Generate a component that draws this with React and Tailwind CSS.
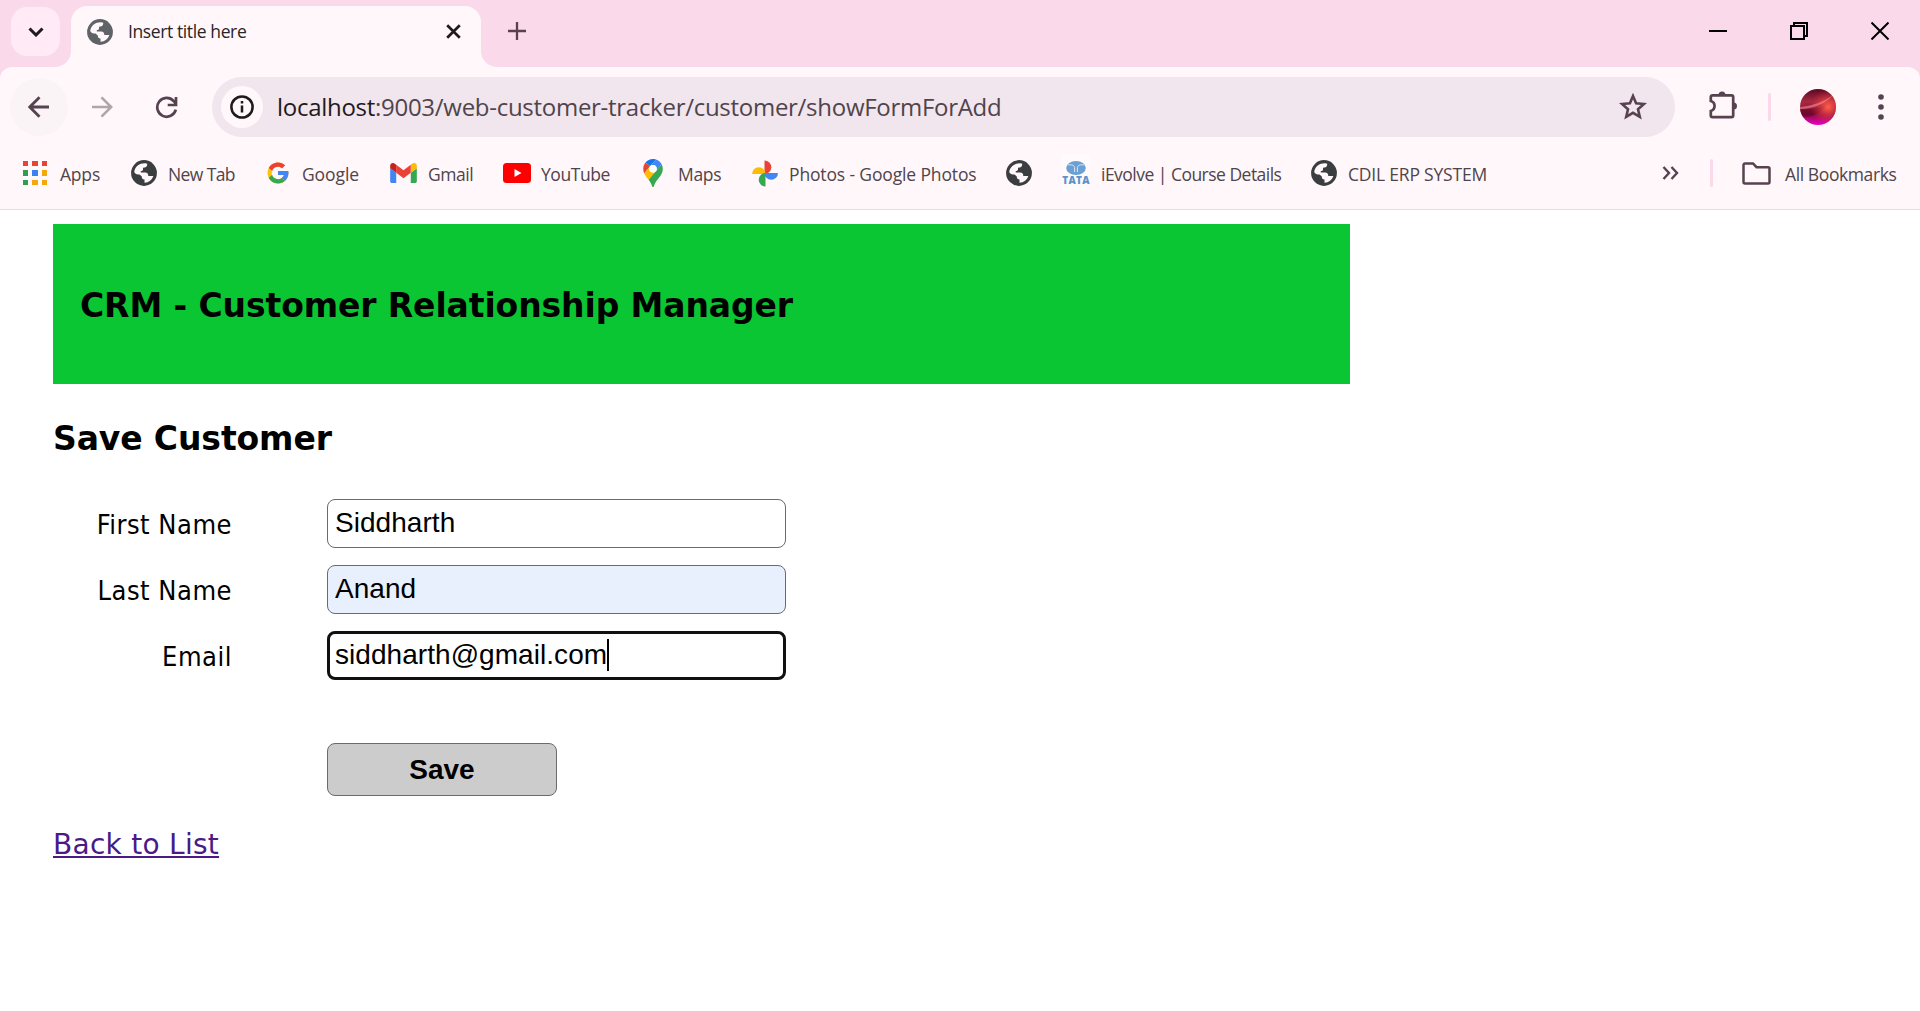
import React from "react";

function Globe({ size = 26, color = "#3b3e40", bg = "#fff7f9" }) {
  return (
    <svg width={size} height={size} viewBox="0 0 26 26">
      <circle cx="13" cy="13" r="12.900" fill={color} />
      <path
        d="M3.200 12C4 6.500 8.500 3.200 14 3.300l2.300.5c0 3-1.800 4-4.300 4v1.700c0 1-1 1.500-2.200 1.500v1.500H14c2.500 0 3.300 1.300 3.300 3.500h5C21 20 18 22.500 13.500 22.800v-3.300c-2 0-2.700-1-2.700-3l-2.300-2c-2.500 0-4.500-.5-5.300-2.500z"
        fill={bg}
      />
    </svg>
  );
}

function AppsIcon() {
  const c = ["#ea4335", "#ea4335", "#ea4335", "#2e9e52", "#3b82f0", "#f5a80c", "#2e9e52", "#f5a80c", "#f5a80c"];
  return (
    <div className="grid w-6 grid-cols-3 gap-x-[4px] gap-y-[4px]">
      {c.map((x, i) => (
        <span key={i} className="h-[5.300px] w-[5.300px]" style={{ background: x }} />
      ))}
    </div>
  );
}

function Google() {
  return (
    <svg width="22" height="22" viewBox="3 3 42 42">
      <path fill="#FFC107" d="M43.611 20.083H42V20H24v8h11.303c-1.649 4.657-6.080 8-11.303 8-6.627 0-12-5.373-12-12s5.373-12 12-12c3.059 0 5.842 1.154 7.961 3.039l5.657-5.657C34.046 6.053 29.268 4 24 4 12.955 4 4 12.955 4 24s8.955 20 20 20 20-8.955 20-20c0-1.341-.138-2.650-.389-3.917z" />
      <path fill="#EA4335" d="M6.306 14.691l6.571 4.819C14.655 15.108 18.961 12 24 12c3.059 0 5.842 1.154 7.961 3.039l5.657-5.657C34.046 6.053 29.268 4 24 4 16.318 4 9.656 8.337 6.306 14.691z" />
      <path fill="#34A853" d="M24 44c5.166 0 9.860-1.977 13.409-5.192l-6.190-5.238C29.211 35.091 26.715 36 24 36c-5.202 0-9.619-3.317-11.283-7.946l-6.522 5.025C9.505 39.556 16.227 44 24 44z" />
      <path fill="#4285F4" d="M43.611 20.083H42V20H24v8h11.303c-.792 2.237-2.231 4.166-4.087 5.571l6.193 5.238C36.971 39.205 44 34 44 24c0-1.341-.138-2.650-.389-3.917z" />
    </svg>
  );
}

function Gmail() {
  return (
    <svg width="27" height="20" viewBox="52 42 88 66">
      <path fill="#4285f4" d="M58 108h14V74L52 59v43c0 3.320 2.690 6 6 6" />
      <path fill="#34a853" d="M120 108h14c3.320 0 6-2.690 6-6V59l-20 15" />
      <path fill="#fbbc04" d="M120 48v26l20-15v-8c0-7.420-8.470-11.650-14.400-7.200" />
      <path fill="#ea4335" d="M72 74V48l24 18 24-18v26L96 92" />
      <path fill="#c5221f" d="M52 51v8l20 15V48l-5.600-4.200c-5.940-4.450-14.400-.22-14.400 7.200" />
    </svg>
  );
}

function YouTube() {
  return (
    <svg width="28" height="20" viewBox="0 0 28 20">
      <rect width="28" height="20" rx="3.500" fill="#f00" />
      <path d="M11.500 6v8l7-4z" fill="#fff" />
    </svg>
  );
}

function Maps() {
  return (
    <svg width="20" height="28" viewBox="0 0 92.300 132.300">
      <path fill="#1a73e8" d="M60.200 2.200C55.800.8 51 0 46.100 0 32 0 19.300 6.400 10.800 16.500l21.800 18.300z" />
      <path fill="#ea4335" d="M10.800 16.500C4.100 24.500 0 34.900 0 46.100c0 8.700 1.700 15.700 4.600 22l28-33.300z" />
      <path fill="#4285f4" d="M46.200 28.500c9.800 0 17.700 7.900 17.700 17.700 0 4.300-1.600 8.300-4.200 11.400 0 0 13.900-16.600 27.500-32.700-5.600-10.800-15.300-19-27-22.700L32.600 34.800c3.300-3.800 8.100-6.300 13.600-6.300" />
      <path fill="#fbbc04" d="M46.200 63.800c-9.800 0-17.700-7.900-17.700-17.700 0-4.300 1.500-8.300 4.100-11.300l-28 33.300c4.800 10.600 12.800 19.200 21 29.900l34.100-40.500c-3.300 3.900-8.100 6.300-13.500 6.300" />
      <path fill="#34a853" d="M59.100 109.200c15.400-24.100 33.300-35 33.300-63 0-7.700-1.900-14.900-5.200-21.300L25.600 98c2.600 3.400 5.300 7.300 7.900 11.300 9.400 14.500 6.800 23.100 12.800 23.100s3.400-8.700 12.800-23.200" />
      <circle cx="46" cy="46" r="18" fill="#fff" />
    </svg>
  );
}

function Photos() {
  return (
    <svg width="26" height="27" viewBox="0 0 26 27">
      <path fill="#ea4335" d="M12.500 0.500a6.800 6.800 0 0 1 0 13.600z" />
      <path fill="#fbbc04" d="M0 14a6.800 6.800 0 0 1 13.600 0z" />
      <path fill="#34a853" d="M13.500 26.500a6.800 6.800 0 0 1 0-13.600z" />
      <path fill="#4285f4" d="M26 13a6.800 6.800 0 0 1-13.600 0z" />
    </svg>
  );
}

function Tata() {
  return (
    <div className="flex h-[36px] w-[28px] flex-col items-center justify-center bg-[#fffafc]">
      <svg width="20" height="14" viewBox="0 0 20 14">
        <ellipse cx="10" cy="7" rx="9.800" ry="6.900" fill="#6c9fd3" />
        <path d="M8.600 11V6.500C8.400 4 5 3.400 1.500 4M11.400 11V6.500C11.600 4 15 3.400 18.500 4" stroke="#dbe9f6" strokeWidth="1" fill="none" />
      </svg>
      <span className="text-[10px] leading-[11px] font-extrabold tracking-[0.300px] text-[#5b93cc]">TATA</span>
    </div>
  );
}

function Bookmark({ icon, label, className, iconClass, track }) {
  return (
    <div className={"flex shrink-0 items-center " + className}>
      <span className={"flex shrink-0 items-center " + iconClass}>{icon}</span>
      <span className={"pt-[2px] whitespace-nowrap " + track}>{label}</span>
    </div>
  );
}

function TabStrip() {
  return (
    <div className="flex h-[67px] bg-[#fadaea]">
      <div className="mt-[7px] ml-[11px] flex h-[49px] w-[49px] items-center justify-center rounded-[16px] bg-[#ffeaf5]">
        <svg width="16" height="10" viewBox="0 0 16 10" fill="none" stroke="#1f1a1d" strokeWidth="3">
          <path d="M1.500 1.500 8 8l6.500-6.500" />
        </svg>
      </div>
      <svg className="mt-[51px] -ml-[5px]" width="16" height="16" viewBox="0 0 16 16">
        <path d="M16 0v16H0A16 16 0 0 0 16 0z" fill="#fff7f9" />
      </svg>
      <div className="mt-[6px] flex w-[410px] items-center rounded-t-[16px] bg-[#fff7f9] pb-[10px] pl-[16px]">
        <Globe color="#5f6368" />
        <span className="ml-[15px] flex-1 text-[17.500px] tracking-[-0.390px] text-[#2a2427]">Insert title here</span>
        <svg className="mr-[20px]" width="15" height="15" viewBox="0 0 15 15" stroke="#1f1a1d" strokeWidth="2.700">
          <path d="M1.200 1.200l12.600 12.600M13.800 1.200 1.200 13.800" />
        </svg>
      </div>
      <svg className="mt-[51px]" width="16" height="16" viewBox="0 0 16 16">
        <path d="M0 0v16h16A16 16 0 0 1 0 0z" fill="#fff7f9" />
      </svg>
      <svg className="mt-[22px] ml-[11px]" width="18" height="18" viewBox="0 0 18 18" stroke="#5a414f" strokeWidth="2.300">
        <path d="M9 0v18M0 9h18" />
      </svg>
      <div className="mt-[22px] mr-[31px] ml-auto flex h-[18px]">
        <svg width="18" height="18" viewBox="0 0 18 18" stroke="#000" strokeWidth="2">
          <path d="M0 9h18" />
        </svg>
        <svg className="ml-[63px]" width="18" height="18" viewBox="0 0 18 18" stroke="#000" strokeWidth="2" fill="none">
          <path d="M1 4h13v13H1zM4 4V1h13v13h-3" />
        </svg>
        <svg className="ml-[63px]" width="18" height="18" viewBox="0 0 18 18" stroke="#000" strokeWidth="2">
          <path d="M.5.5l17 17M17.500.5l-17 17" />
        </svg>
      </div>
    </div>
  );
}

function Toolbar() {
  return (
    <div className="flex h-[79px] items-center rounded-t-[12px] bg-[#fff7f9]">
      <div className="ml-[10px] flex h-[58px] w-[58px] items-center justify-center rounded-full bg-[#fbf4f6]">
        <svg width="22" height="22" viewBox="0 0 22 22" fill="none" stroke="#574350" strokeWidth="2.800">
          <path d="M21 11H2M11.500 1.300 1.800 11l9.700 9.700" />
        </svg>
      </div>
      <svg className="ml-[23px]" width="22" height="22" viewBox="0 0 22 22" fill="none" stroke="#b0a5aa" strokeWidth="2.600">
        <path d="M1 11h19M10.500 1.300 20.200 11l-9.700 9.700" />
      </svg>
      <svg className="mt-[2px] ml-[42px]" width="23" height="23" viewBox="0 0 23 23" fill="none" stroke="#574350" strokeWidth="2.700">
        <path d="M20.800 13.600A9.400 9.400 0 1 1 18.600 5l2.400 3M21 1v8h-8.300" />
      </svg>
      <div className="ml-[34px] flex h-[60px] w-[1463px] items-center rounded-full bg-[#f1e5ee]">
        <div className="ml-[9px] flex h-[42px] w-[42px] items-center justify-center rounded-full bg-[#fff7f9]">
          <svg width="24" height="24" viewBox="0 0 24 24" fill="none" stroke="#1f1a1d" strokeWidth="2.500">
            <circle cx="12" cy="12" r="10.600" />
            <path d="M12 10.500v7M12 6v2.600" />
          </svg>
        </div>
        <span className="ml-[14px] text-[24px] tracking-[-0.280px] whitespace-nowrap text-[#50444b]">
          <span className="text-[#1f1a1d]">localhost</span>:9003/web-customer-tracker/customer/showFormForAdd
        </span>
        <svg className="mr-[28px] ml-auto" width="28" height="27" viewBox="0 0 28 27" fill="none" stroke="#574350" strokeWidth="2.600">
          <path d="M14 3l3.100 7.300 7.900.7-6 5.200 1.800 7.700-6.800-4.100-6.800 4.100L9 16.200 3 11l7.900-.7z" />
        </svg>
      </div>
      <svg className="mb-[3px] ml-[33px]" width="30" height="30" viewBox="0 0 30 30">
        <path d="M4.500 5.300h19a1.700 1.700 0 0 1 1.700 1.700v18.500a1.700 1.700 0 0 1-1.700 1.700h-19A1.700 1.700 0 0 1 2.800 25.500v-4.500c5-1.500 5-8.500 0-10V7a1.700 1.700 0 0 1 1.700-1.700z" fill="none" stroke="#574350" strokeWidth="2.700" />
        <path d="M10.500 5a3.500 3.500 0 0 1 7 0zM25.500 12.500a3.500 3.500 0 0 1 0 7z" fill="#574350" />
      </svg>
      <div className="ml-[30px] h-[28px] w-[3px] rounded bg-[#fadaea]" />
      <svg className="ml-[29px]" width="36" height="36" viewBox="0 0 36 36">
        <defs>
          <linearGradient id="av" x1="0" y1="0" x2="0" y2="1">
            <stop offset="0" stopColor="#5a0824" />
            <stop offset=".35" stopColor="#a82840" />
            <stop offset=".7" stopColor="#8a0c40" />
            <stop offset="1" stopColor="#f000c8" />
          </linearGradient>
          <radialGradient id="glow" cx=".78" cy=".5" r=".5">
            <stop offset="0" stopColor="#ff6048" />
            <stop offset="1" stopColor="#e02838" stopOpacity="0" />
          </radialGradient>
          <clipPath id="cl"><circle cx="18" cy="18" r="18" /></clipPath>
        </defs>
        <g clipPath="url(#cl)">
          <rect width="36" height="36" fill="url(#av)" />
          <path d="M0 20c9 1 20-1 27-5-6 11-20 15-27 12z" fill="#500018" opacity=".45" />
          <rect width="36" height="36" fill="url(#glow)" />
          <path d="M0 18C12 17 24 13 33 6 27 14 13 20 0 20z" fill="#f0938a" opacity=".6" />
        </g>
      </svg>
      <svg className="ml-[42px]" width="6" height="26" viewBox="0 0 6 26" fill="#574350">
        <circle cx="3" cy="3" r="2.800" /><circle cx="3" cy="13" r="2.800" /><circle cx="3" cy="23" r="2.800" />
      </svg>
    </div>
  );
}

function Bookmarks() {
  return (
    <div className="flex h-[64px] items-center border-b border-[#e8dde4] bg-[#fff7f9] pb-[9px] pl-[23px] text-[17.500px] text-[#50444b]">
      <Bookmark icon={<AppsIcon />} label="Apps" className="w-[108px]" iconClass="w-[37px]" track="tracking-[-0.200px]" />
      <Bookmark icon={<Globe />} label="New Tab" className="w-[136px]" iconClass="w-[37px]" track="tracking-[-0.600px]" />
      <Bookmark icon={<Google />} label="Google" className="w-[123px]" iconClass="w-[35px]" track="tracking-[-0.100px]" />
      <Bookmark icon={<Gmail />} label="Gmail" className="w-[113px]" iconClass="w-[38px]" track="tracking-[-0.450px]" />
      <Bookmark icon={<YouTube />} label="YouTube" className="w-[140px]" iconClass="w-[38px]" track="tracking-[-0.450px]" />
      <Bookmark icon={<Maps />} label="Maps" className="w-[109px]" iconClass="w-[35px]" track="tracking-[-0.300px]" />
      <Bookmark icon={<Photos />} label="Photos - Google Photos" className="w-[254px]" iconClass="w-[37px]" track="tracking-[-0.140px]" />
      <Bookmark icon={<Globe />} label="" className="w-[56px]" iconClass="w-[37px]" track="" />
      <Bookmark icon={<Tata />} label="iEvolve | Course Details" className="w-[249px]" iconClass="w-[39px]" track="tracking-[-0.520px]" />
      <Bookmark icon={<Globe />} label="CDIL ERP SYSTEM" className="w-[200px]" iconClass="w-[37px]" track="tracking-[-0.200px]" />
      <svg className="mr-[31px] ml-auto" width="17" height="14" viewBox="0 0 17 14" fill="none" stroke="#574350" strokeWidth="2.400">
        <path d="M1.500 1 7 7l-5.500 6M9.500 1 15 7l-5.500 6" />
      </svg>
      <div className="h-[28px] w-[3px] rounded bg-[#fadaea]" />
      <svg className="ml-[29px]" width="29" height="23" viewBox="0 0 29 23" fill="none" stroke="#574350" strokeWidth="2.500">
        <path d="M3 1.500h8l3.500 3.700H26a1.500 1.500 0 0 1 1.500 1.500V20a1.500 1.500 0 0 1-1.500 1.500H3A1.500 1.500 0 0 1 1.500 20V3A1.500 1.500 0 0 1 3 1.500z" />
      </svg>
      <span className="ml-[14px] w-[135px] pt-[2px] tracking-[-0.400px] whitespace-nowrap">All Bookmarks</span>
    </div>
  );
}

function Row({ label, value, fieldClass, caret }) {
  return (
    <div className="flex h-[66px] items-center">
      <label className="w-[179px] pt-[4px] text-right font-['DejaVu_Sans_Condensed','DejaVu_Sans',sans-serif] text-[27px] tracking-[0.500px] [font-stretch:condensed]">
        {label}
      </label>
      <div className={"ml-[95px] flex h-[49px] w-[459px] items-center rounded-[8px] font-['Liberation_Sans',sans-serif] text-[28px] " + fieldClass}>
        <span className="tracking-[0.050px]">{value}</span>
        {caret && <span className="h-[32px] w-[2px] bg-black" />}
      </div>
    </div>
  );
}

export default function App() {
  return (
    <div className="h-[1011px] w-[1920px] overflow-hidden bg-white font-['Open_Sans',sans-serif]">
      <div className="bg-[#fadaea]">
        <TabStrip />
        <Toolbar />
        <Bookmarks />
      </div>
      <main className="pt-[14px] pl-[53px] font-['DejaVu_Sans',sans-serif] text-black">
        <header className="flex h-[160px] w-[1297px] items-center bg-[#0bc633] pt-[4px] pl-[27px]">
          <h2 className="text-[33px] font-bold tracking-[-0.110px] whitespace-nowrap">CRM - Customer Relationship Manager</h2>
        </header>
        <h3 className="mt-[31px] text-[33px] leading-[48px] font-bold tracking-[-0.110px]">Save Customer</h3>
        <div className="mt-[27px]">
          <Row label="First Name" value="Siddharth" fieldClass="border border-[#6b6b6b] pl-[7px]" />
          <Row label="Last Name" value="Anand" fieldClass="border border-[#6b6b6b] bg-[#e8f0fe] pl-[7px]" />
          <Row label="Email" value="siddharth@gmail.com" fieldClass="border-[3px] border-[#101010] pl-[5px]" caret />
        </div>
        <button className="mt-[55px] ml-[274px] block h-[53px] w-[230px] rounded-[8px] border border-[#6b6b6b] bg-[#cccccc] font-['Liberation_Sans',sans-serif] text-[28px] font-bold">
          Save
        </button>
        <a className="mt-[30px] block w-fit text-[28px] leading-[38px] tracking-[0.270px] text-[#4b1a87] underline">Back to List</a>
      </main>
    </div>
  );
}
